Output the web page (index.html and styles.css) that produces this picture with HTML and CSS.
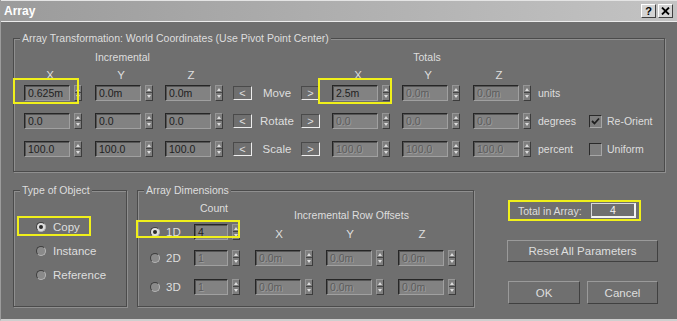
FILE: index.html
```html
<!DOCTYPE html>
<html>
<head>
    <title>Array</title>
    <meta charset="UTF-8">
    <link rel="stylesheet" href="styles.css">
</head>
<body>
<div class="dialog">
    <div class="titlebar">
        <span class="title">Array</span>
        <div class="title-buttons">
            <span class="tbtn">?</span>
            <span class="tbtn"><svg width="9" height="8" viewBox="0 0 9 8"><path d="M1 0.5 L8 7.5 M8 0.5 L1 7.5" stroke="#000" stroke-width="1.8"/></svg></span>
        </div>
    </div>

    <div class="group transform">
        <span class="legend">Array Transformation: World Coordinates (Use Pivot Point Center)</span>

        <div class="trow heads">
            <span class="inc-head">Incremental</span>
            <span class="tot-head">Totals</span>
        </div>

        <div class="trow axes">
            <span class="axis">X</span>
            <span class="axis">Y</span>
            <span class="axis">Z</span>
            <span></span><span></span><span></span>
            <span class="axis">X</span>
            <span class="axis">Y</span>
            <span class="axis">Z</span>
        </div>

        <div class="trow first">
            <div class="spin"><span class="field">0.625m</span><span class="arrows"></span><span class="hl hl-x"></span></div>
            <div class="spin"><span class="field">0.0m</span><span class="arrows"></span></div>
            <div class="spin"><span class="field">0.0m</span><span class="arrows"></span></div>
            <span class="nudge">&lt;</span>
            <span class="op">Move</span>
            <span class="nudge">&gt;</span>
            <div class="spin"><span class="field">2.5m</span><span class="arrows"></span><span class="hl hl-tx"></span></div>
            <div class="spin"><span class="field off">0.0m</span><span class="arrows"></span></div>
            <div class="spin"><span class="field off">0.0m</span><span class="arrows"></span></div>
            <span class="unit">units</span>
        </div>

        <div class="trow">
            <div class="spin"><span class="field">0.0</span><span class="arrows"></span></div>
            <div class="spin"><span class="field">0.0</span><span class="arrows"></span></div>
            <div class="spin"><span class="field">0.0</span><span class="arrows"></span></div>
            <span class="nudge">&lt;</span>
            <span class="op">Rotate</span>
            <span class="nudge">&gt;</span>
            <div class="spin"><span class="field off">0.0</span><span class="arrows"></span></div>
            <div class="spin"><span class="field off">0.0</span><span class="arrows"></span></div>
            <div class="spin"><span class="field off">0.0</span><span class="arrows"></span></div>
            <span class="unit">degrees</span>
            <label class="check"><span class="box"><svg width="11" height="11" viewBox="0 0 11 11"><path d="M2 5 L4.5 7.5 L9 2.5" fill="none" stroke="#1e1e1e" stroke-width="1.8"/></svg></span>Re-Orient</label>
        </div>

        <div class="trow">
            <div class="spin"><span class="field">100.0</span><span class="arrows"></span></div>
            <div class="spin"><span class="field">100.0</span><span class="arrows"></span></div>
            <div class="spin"><span class="field">100.0</span><span class="arrows"></span></div>
            <span class="nudge">&lt;</span>
            <span class="op">Scale</span>
            <span class="nudge">&gt;</span>
            <div class="spin"><span class="field off">100.0</span><span class="arrows"></span></div>
            <div class="spin"><span class="field off">100.0</span><span class="arrows"></span></div>
            <div class="spin"><span class="field off">100.0</span><span class="arrows"></span></div>
            <span class="unit">percent</span>
            <label class="check"><span class="box"></span>Uniform</label>
        </div>
    </div>

    <div class="lower">
        <div class="group type">
            <span class="legend">Type of Object</span>
            <div class="opt"><span class="radio on"></span>Copy<span class="hl hl-copy"></span></div>
            <div class="opt"><span class="radio"></span>Instance</div>
            <div class="opt"><span class="radio"></span>Reference</div>
        </div>

        <div class="group dims">
            <span class="legend">Array Dimensions</span>
            <div class="drow dhead">
                <span class="count-head">Count</span>
                <span class="offs-head">Incremental Row Offsets</span>
            </div>
            <div class="drow">
                <span class="radio on"></span>
                <span>1D</span>
                <div class="spin"><span class="field count">4</span><span class="arrows"></span></div>
                <span class="axis small">X</span>
                <span class="axis small">Y</span>
                <span class="axis small">Z</span>
                <span class="hl hl-1d"></span>
            </div>
            <div class="drow d2">
                <span class="radio"></span>
                <span>2D</span>
                <div class="spin"><span class="field count off">1</span><span class="arrows"></span></div>
                <div class="spin"><span class="field off">0.0m</span><span class="arrows"></span></div>
                <div class="spin"><span class="field off">0.0m</span><span class="arrows"></span></div>
                <div class="spin"><span class="field off">0.0m</span><span class="arrows"></span></div>
            </div>
            <div class="drow d3">
                <span class="radio"></span>
                <span>3D</span>
                <div class="spin"><span class="field count off">1</span><span class="arrows"></span></div>
                <div class="spin"><span class="field off">0.0m</span><span class="arrows"></span></div>
                <div class="spin"><span class="field off">0.0m</span><span class="arrows"></span></div>
                <div class="spin"><span class="field off">0.0m</span><span class="arrows"></span></div>
            </div>
        </div>

        <div class="side">
            <div class="total">
                <span>Total in Array:</span>
                <span class="total-field">4</span>
            </div>
            <div class="btn reset">Reset All Parameters</div>
            <div class="btns">
                <div class="btn ok">OK</div>
                <div class="btn cancel">Cancel</div>
            </div>
        </div>
    </div>
</div>
</body>
</html>
```

FILE: styles.css
```css
body {
    margin: 0;
    font-family: "Liberation Sans", Arial, sans-serif;
    font-size: 10.5px;
    line-height: 14px;
    color: #dedede;
}
.dialog {
    width: 677px;
    height: 321px;
    box-sizing: border-box;
    background: #6f6f6f;
    border-left: 1px solid #9c9c9c;
    border-bottom: 2px solid #cfcfcf;
    overflow: hidden;
    white-space: nowrap;
}
.titlebar {
    height: 22px;
    box-sizing: border-box;
    border-top: 1px solid #e4e4e4;
    border-bottom: 1px solid #ececec;
    background: linear-gradient(to right, #9b9b9b, #c3c3c3);
    display: flex;
    align-items: center;
    justify-content: space-between;
    padding: 0 4px 0 3px;
}
.title {
    font-weight: bold;
    font-size: 12px;
    color: #fff;
}
.title-buttons {
    display: flex;
    gap: 2px;
}
.tbtn {
    width: 15px;
    height: 14px;
    box-sizing: border-box;
    background: #d4d4d4;
    border: 1px solid;
    border-color: #fff #404040 #404040 #fff;
    display: flex;
    align-items: center;
    justify-content: center;
    font-weight: bold;
    font-size: 11px;
    color: #000;
}

/* etched group boxes */
.group {
    position: relative;
    box-sizing: border-box;
    border: 1px solid #4b4b4b;
    box-shadow: 1px 1px 0 #8f8f8f, inset 1px 1px 0 #8f8f8f;
}
.legend {
    position: absolute;
    top: -8px;
    left: 6px;
    padding: 0 2px;
    background: #6f6f6f;
}
.transform {
    margin: 16px 0 0 12px;
    width: 652px;
    height: 134px;
    padding: 11px 0 0 10px;
}
.trow {
    display: grid;
    grid-template-columns: 71px 70px 68px 20px 48px 31px 70px 71px 65px 51px 1fr;
    align-items: center;
    height: 16px;
    margin-top: 12px;
}
.heads {
    height: 14px;
    margin-top: 0;
}
.axes {
    height: 14px;
    margin-top: 4px;
    font-size: 11.5px;
}
.first {
    margin-top: 3px;
}
.inc-head {
    grid-column: 1 / 4;
    text-align: center;
    padding-right: 12px;
}
.tot-head {
    grid-column: 7 / 10;
    text-align: center;
    padding-right: 16px;
}
.axis {
    width: 52px;
    text-align: center;
}

/* spinner */
.spin {
    position: relative;
    display: flex;
    gap: 4px;
}
.field {
    width: 46px;
    height: 16px;
    box-sizing: border-box;
    background: #828282;
    border: 1px solid;
    border-color: #262626 #a0a0a0 #a0a0a0 #262626;
    box-shadow: inset 1px 1px 0 #555;
    color: #1e1e1e;
    padding-left: 3px;
    line-height: 14px;
    overflow: hidden;
}
.field.off {
    color: #5c5c5c;
    text-shadow: 1px 1px 0 #9c9c9c;
}
.field.count {
    width: 34px;
}
.arrows {
    position: relative;
    width: 8px;
    height: 16px;
    box-sizing: border-box;
    background: linear-gradient(to bottom, #7e7e7e 0 6px, #454545 6px 7px, #7e7e7e 7px);
    border: 1px solid;
    border-color: #969696 #3c3c3c #3c3c3c #969696;
}
.arrows::before,
.arrows::after {
    content: "";
    position: absolute;
    left: 1px;
    border-left: 2px solid transparent;
    border-right: 2px solid transparent;
}
.arrows::before {
    top: 2px;
    border-bottom: 3px solid #dcdcdc;
}
.arrows::after {
    bottom: 2px;
    border-top: 3px solid #dcdcdc;
}

.nudge {
    width: 19px;
    height: 14px;
    box-sizing: border-box;
    border: 1px solid;
    border-color: #4a4a4a #ededed #ededed #4a4a4a;
    display: flex;
    align-items: center;
    justify-content: center;
    font-size: 11px;
}
.op {
    text-align: center;
    font-size: 11.5px;
}
.check {
    display: flex;
    align-items: center;
    gap: 5px;
}
.box {
    width: 13px;
    height: 13px;
    box-sizing: border-box;
    background: #7d7d7d;
    border: 1px solid;
    border-color: #2a2a2a #a6a6a6 #a6a6a6 #2a2a2a;
    display: flex;
    align-items: center;
    justify-content: center;
}

/* yellow annotation frames */
.hl {
    position: absolute;
    box-sizing: border-box;
    border: 2px solid #f0f01a;
}
.hl-x {
    left: -11px;
    top: -7px;
    width: 66px;
    height: 26px;
}
.hl-tx {
    left: -14px;
    top: -7px;
    width: 74px;
    height: 26px;
}
.hl-copy {
    left: -19px;
    top: -3px;
    width: 74px;
    height: 20px;
}
.hl-1d {
    left: -14px;
    top: -2px;
    width: 104px;
    height: 18px;
}

/* lower part */
.lower {
    display: flex;
    align-items: flex-start;
    margin: 18px 0 0 12px;
}
.type {
    width: 114px;
    height: 117px;
    padding: 28px 0 0 22px;
    display: flex;
    flex-direction: column;
    gap: 8px;
}
.opt {
    position: relative;
    display: flex;
    align-items: center;
    gap: 7px;
    height: 16px;
    font-size: 11.5px;
}
.radio {
    position: relative;
    width: 10px;
    height: 10px;
    box-sizing: border-box;
    border-radius: 50%;
    background: #8a8a8a;
    border: 1px solid;
    border-color: #3e3e3e #b6b6b6 #b6b6b6 #3e3e3e;
}
.radio.on {
    background: #dedede;
}
.radio.on::after {
    content: "";
    position: absolute;
    left: 2px;
    top: 2px;
    width: 4px;
    height: 4px;
    border-radius: 50%;
    background: #2a2a2a;
}
.dims {
    margin-left: 10px;
    width: 337px;
    height: 117px;
    padding: 10px 0 0 12px;
}
.drow {
    position: relative;
    display: grid;
    grid-template-columns: 16px 28px 61px 71px 72px 60px;
    align-items: center;
    height: 16px;
    font-size: 11.5px;
}
.drow .field {
    font-size: 10.5px;
}
.dhead {
    height: 21px;
    font-size: 10.5px;
}
.count-head {
    grid-column: 3;
    width: 40px;
    text-align: center;
    align-self: start;
}
.offs-head {
    grid-column: 4 / 7;
    text-align: center;
    padding-right: 10px;
    align-self: end;
}
.axis.small {
    width: 48px;
    align-self: start;
    margin-top: 5px;
}
.d2 {
    margin-top: 12px;
}
.d3 {
    margin-top: 13px;
}

.side {
    margin-left: 33px;
    width: 151px;
    padding-top: 10px;
    display: flex;
    flex-direction: column;
}
.total {
    margin-left: 1px;
    width: 133px;
    height: 21px;
    box-sizing: border-box;
    border: 2px solid #f0f01a;
    display: flex;
    align-items: center;
    padding-left: 8px;
}
.total-field {
    margin-left: auto;
    margin-right: 3px;
    width: 45px;
    height: 15px;
    box-sizing: border-box;
    border: 1px solid #d8d8d8;
    border-right: 2px solid #f4f4f4;
    border-bottom: 2px solid #f4f4f4;
    text-align: center;
    line-height: 12px;
    color: #f2f2f2;
}
.btn {
    height: 22px;
    box-sizing: border-box;
    border: 1px solid;
    border-color: #9a9a9a #404040 #404040 #9a9a9a;
    display: flex;
    align-items: center;
    justify-content: center;
    font-size: 11.5px;
}
.reset {
    margin-top: 19px;
}
.btns {
    display: flex;
    gap: 7px;
    margin: 19px 0 0 1px;
}
.ok {
    width: 72px;
    height: 23px;
}
.cancel {
    width: 71px;
    height: 23px;
}
```
